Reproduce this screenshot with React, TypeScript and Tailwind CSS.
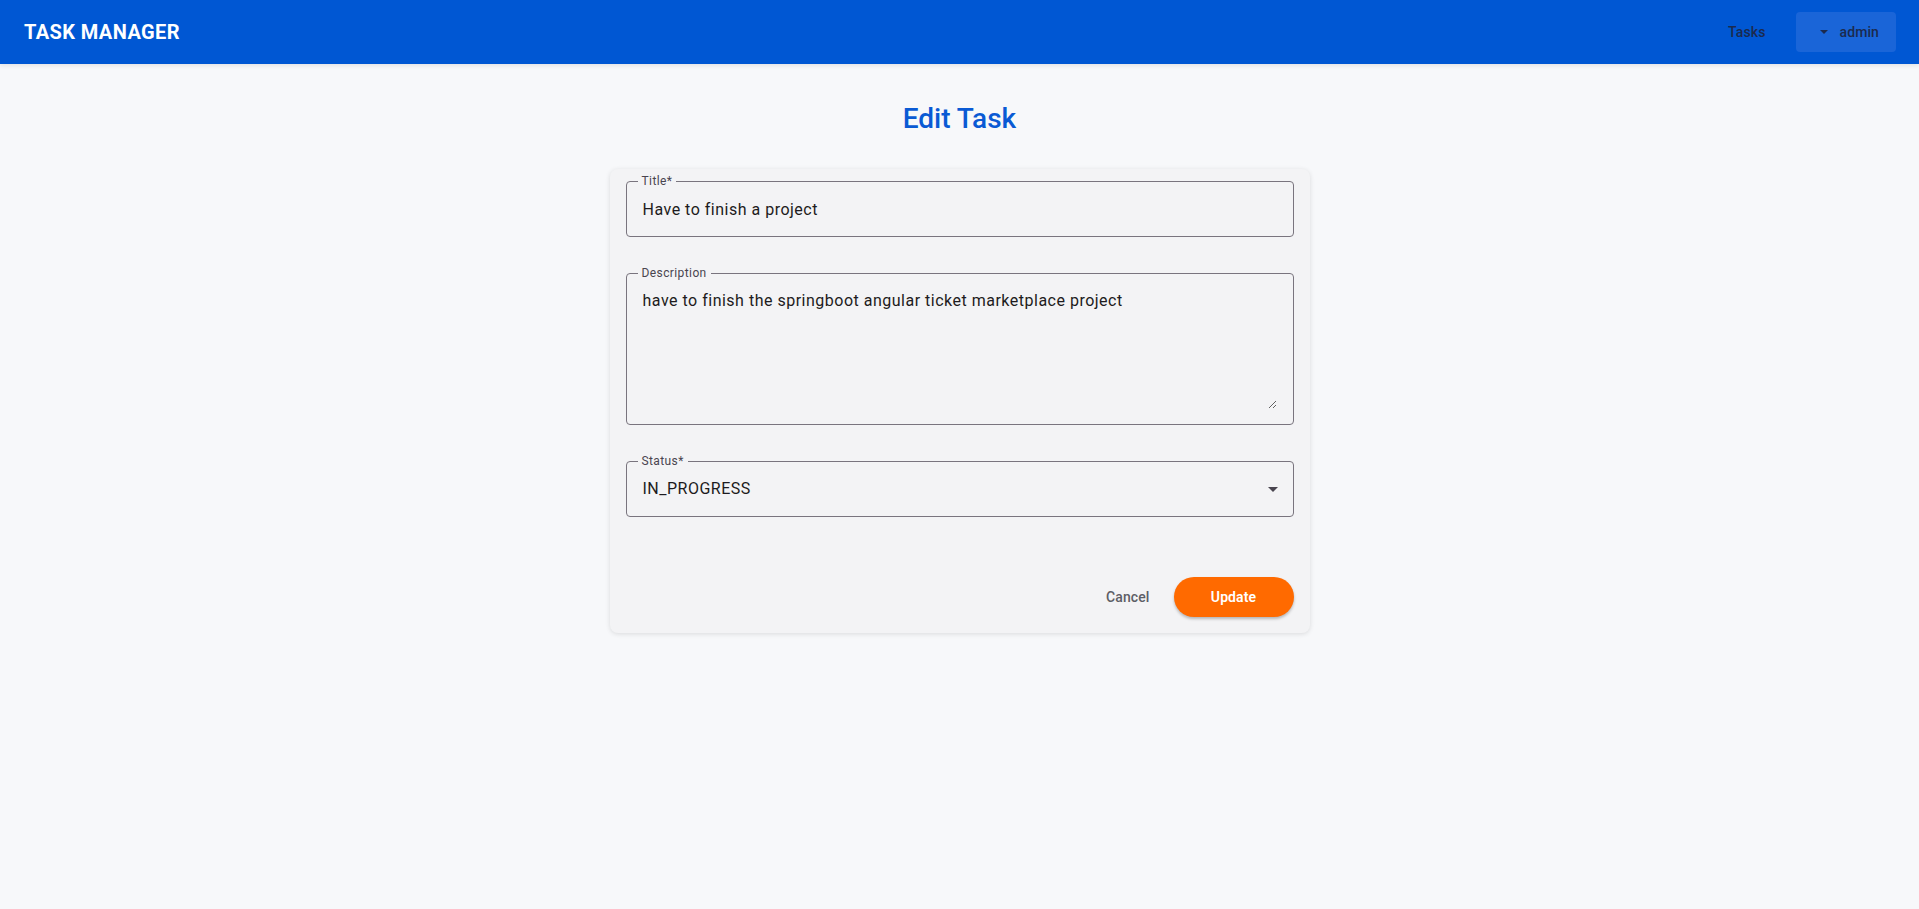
import { useState } from 'react'

const Caret = ({ className }: { className?: string }) => (
  <svg className={className} width="10" height="5" viewBox="0 0 10 5" fill="currentColor">
    <path d="M0 0h10L5 5z" />
  </svg>
)

const Header = () => (
  <header className="h-16 bg-[#0057d3] flex items-center justify-between pl-6 pr-[23px] shadow-[0_2px_4px_rgba(0,0,0,0.08)]">
    <span className="text-white text-[20px] font-bold tracking-[0.4px]">TASK MANAGER</span>
    <nav className="flex items-center gap-[14px]">
      <button className="h-10 px-4 text-sm font-medium tracking-[0.1px] text-[#1b2a4e]">Tasks</button>
      <button className="h-10 rounded bg-[#1a65d8] pl-6 pr-[17px] flex items-center gap-3 text-sm font-medium tracking-[0.1px] text-[#1b2a4e]">
        <Caret className="w-2 h-1" />
        admin
      </button>
    </nav>
  </header>
)

const Field = ({ label, children }: { label: string; children: React.ReactNode }) => (
  <div className="relative rounded border border-[#79747e]">
    <span className="absolute left-[11px] -top-[9px] px-1 text-xs leading-4 tracking-[0.4px] text-[#49454f] bg-[#f3f3f5]">
      {label}
    </span>
    {children}
  </div>
)

const App = () => {
  const [title, setTitle] = useState('Have to finish a project')
  const [description, setDescription] = useState(
    'have to finish the springboot angular ticket marketplace project'
  )

  return (
    <div className="min-h-screen bg-[#f7f8fa] font-[Roboto,sans-serif]">
      <Header />
      <main className="px-4">
        <h1 className="mt-[37px] mb-8 text-center text-[28px] leading-9 font-medium text-[#0a5ad4]">
          Edit Task
        </h1>

        <form
          className="w-[700px] mx-auto rounded-lg bg-[#f3f3f5] shadow-[0_1px_5px_rgba(0,0,0,0.12)] px-4 pt-3 pb-4"
          onSubmit={(e) => e.preventDefault()}
        >
          <Field label="Title*">
            <input
              className="w-full h-[54px] pl-4 pr-4 bg-transparent outline-none text-base tracking-[0.5px] text-[#1d1b20]"
              value={title}
              onChange={(e) => setTitle(e.target.value)}
            />
          </Field>

          <div className="mt-9">
            <Field label="Description">
              <div className="pl-4 pr-4 py-[15px]">
                <textarea
                  className="block w-full h-[120px] bg-transparent outline-none resize-y text-base leading-6 tracking-[0.5px] text-[#1d1b20]"
                  value={description}
                  onChange={(e) => setDescription(e.target.value)}
                />
              </div>
            </Field>
          </div>

          <div className="mt-9">
            <Field label="Status*">
              <div className="h-[54px] pl-4 pr-[15px] flex items-center justify-between text-base tracking-[0.5px] text-[#1d1b20]">
                <span>IN_PROGRESS</span>
                <Caret className="text-[#49454f]" />
              </div>
            </Field>
          </div>

          <div className="mt-[60px] flex items-center justify-end gap-3">
            <button type="button" className="h-10 px-3 text-sm font-medium tracking-[0.1px] text-[#5d5e66]">
              Cancel
            </button>
            <button
              type="submit"
              className="w-[120px] h-10 rounded-full bg-[#ff6a00] text-white text-sm font-semibold tracking-[0.1px] shadow-[0_2px_3px_rgba(0,0,0,0.25)]"
            >
              Update
            </button>
          </div>
        </form>
      </main>
    </div>
  )
}

export default App
